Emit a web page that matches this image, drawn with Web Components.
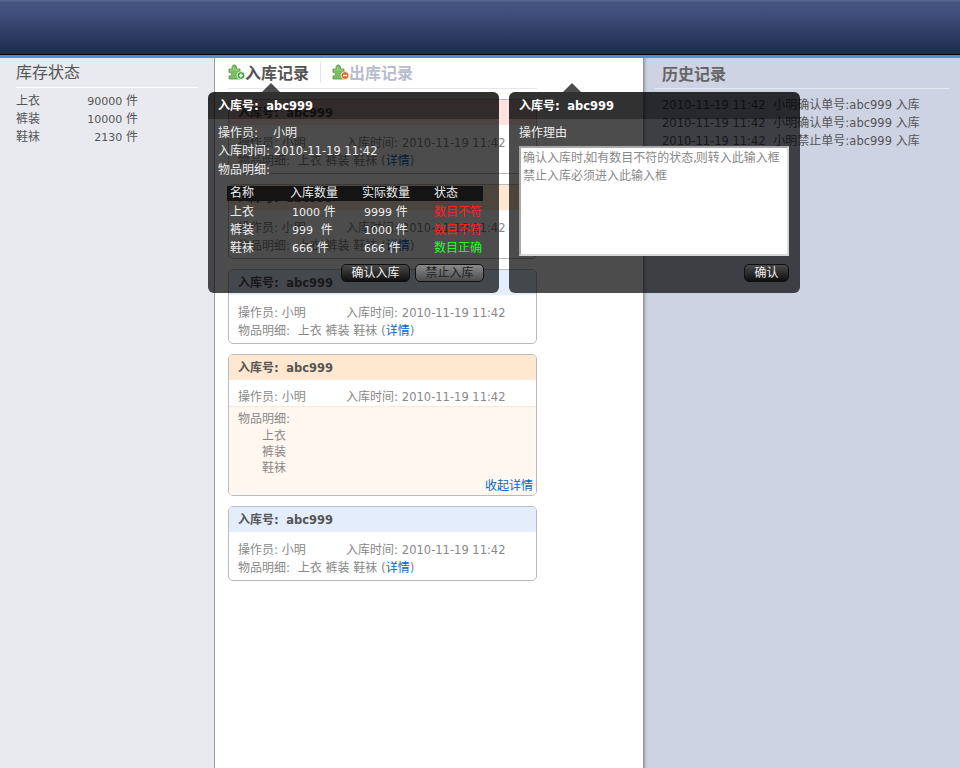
<!DOCTYPE html>
<html lang="zh">
<head>
<meta charset="utf-8">
<title>库存</title>
<style>
html,body{margin:0;height:100%;}
body{font:12px/18px "DejaVu Sans","Noto Sans CJK SC",sans-serif;color:#555;background:#fff;overflow:hidden;}
</style>
</head>
<body>
<stock-app>
  <stock-side slot="left" title="库存状态">
    <stock-row name="上衣" amount="90000"></stock-row>
    <stock-row name="裤装" amount="10000"></stock-row>
    <stock-row name="鞋袜" amount="2130"></stock-row>
  </stock-side>

  <record-tabs slot="center"></record-tabs>
  <record-card slot="center" tone="pink"></record-card>
  <record-card slot="center" tone="orange"></record-card>
  <record-card slot="center" tone="blue"></record-card>
  <record-card slot="center" tone="orange" open></record-card>
  <record-card slot="center" tone="blue"></record-card>

  <history-side slot="right" title="历史记录">
    <div><num-text>2010-11-19 11:42</num-text>&nbsp; 小明确认单号:<num-text>abc999</num-text> 入库</div>
    <div><num-text>2010-11-19 11:42</num-text>&nbsp; 小明确认单号:<num-text>abc999</num-text> 入库</div>
    <div><num-text>2010-11-19 11:42</num-text>&nbsp; 小明禁止单号:<num-text>abc999</num-text> 入库</div>
  </history-side>

  <tip-box slot="over" style="left:208px;top:92px;">
    <detail-tip></detail-tip>
  </tip-box>
  <tip-box slot="over" style="left:509px;top:92px;">
    <reason-tip></reason-tip>
  </tip-box>
</stock-app>

<script>
const puzzleIcon = (kind) => `
<svg width="18" height="16" viewBox="0 0 18 16" aria-hidden="true">
  <path d="M1 5h3.300C3.700 3.600 3.900 1 6.300 1s2.700 2.600 2 4H12v3.200c1-.5 2.600-.2 2.600 1.600S13 11.900 12 11.400V15H1v-3.200c1 .6 2.400.3 2.400-1.500S2 8 1 8.500z" fill="#7ebc62" stroke="#4c9440" stroke-width=".8"/>
  <path d="M2 6h3.500V3M7 4v2h4" fill="none" stroke="#a5d28c" stroke-width="1"/>
  <circle cx="13" cy="11.500" r="3.900" fill="${kind === "add" ? "#3f9e43" : "#e0621c"}" stroke="#fff" stroke-width=".8"/>
  ${kind === "add"
    ? `<path d="M13 9.500v4M11 11.500h4" stroke="#fff" stroke-width="1.400"/>`
    : `<path d="M11 11.500h4" stroke="#fff" stroke-width="1.600"/>`}
</svg>`

class NumText extends HTMLElement {
  connectedCallback() {
    // no whitespace here, the host is inline and it would show up as a space
    this.attachShadow({mode: "open"}).innerHTML = `<style>:host{display:inline;font-size:11.5px;}</style><slot></slot>`
  }
}

class StockApp extends HTMLElement {
  connectedCallback() {
    this.attachShadow({mode: "open"}).innerHTML = `
<style>
:host{display:block;position:relative;height:768px;overflow:hidden;}
.top{
  height:54px;
  background:linear-gradient(#5d6c9c 0,#46547f 2px,#414f7c 12px,#1e2b4f 100%);
  border-bottom:1px solid #000;
}
.line{height:3px;background:#4a8fdc;}
.cols{display:grid;grid-template-columns:215px 428px 1fr;height:710px;}
.left{background:#e8eaf0;border-right:1px solid #979db0;}
.center{background:#fff;padding:0 0 0 13px;}
.right{
  background:#cdd3e3 linear-gradient(90deg,#8a8f9d,#c2c7d6 3px,#cdd3e3 5px) no-repeat left/6px 100%;
}
</style>
<div class="top"></div>
<div class="line"></div>
<div class="cols">
  <div class="left"><slot name="left"></slot></div>
  <div class="center"><slot name="center"></slot></div>
  <div class="right"><slot name="right"></slot></div>
</div>
<slot name="over"></slot>`
  }
}

class StockSide extends HTMLElement {
  connectedCallback() {
    this.attachShadow({mode: "open"}).innerHTML = `
<style>
:host{display:block;padding:5px 16px 0;}
h2{margin:0 0 4px;height:24px;font:16px/16px "Noto Sans CJK SC",sans-serif;color:#555;border-bottom:1px solid #fff;}
</style>
<h2>${this.getAttribute("title")}</h2>
<slot></slot>`
    this.removeAttribute("title")
  }
}

class StockRow extends HTMLElement {
  connectedCallback() {
    this.attachShadow({mode: "open"}).innerHTML = `
<style>
:host{display:flex;width:122px;justify-content:space-between;height:18px;}
num-text{font-size:11px;}
</style>
<span>${this.getAttribute("name")}</span><span><num-text>${this.getAttribute("amount")}</num-text> 件</span>`
  }
}

class HistorySide extends HTMLElement {
  connectedCallback() {
    this.attachShadow({mode: "open"}).innerHTML = `
<style>
:host{display:block;padding:5px 11px 0 12px;}
h2{margin:0 0 7px;padding-left:7px;height:25px;font:bold 16px/21px "Noto Sans CJK SC",sans-serif;color:#666;border-bottom:1px solid #e6e9f1;}
.list{padding-left:7px;color:#555;}
</style>
<h2>${this.getAttribute("title")}</h2>
<div class="list"><slot></slot></div>`
    this.removeAttribute("title")
  }
}

class RecordTabs extends HTMLElement {
  connectedCallback() {
    this.attachShadow({mode: "open"}).innerHTML = `
<style>
:host{display:flex;align-items:center;box-sizing:border-box;width:309px;height:31px;padding-bottom:2px;margin-bottom:10px;border-bottom:1px solid #e3e6ee;font:bold 16px/22px "Noto Sans CJK SC",sans-serif;}
span{display:inline-flex;align-items:center;}
svg{margin-right:-1px;}
.on{color:#555;padding-right:11px;border-right:1px solid #e3e6ee;margin-right:11px;}
.off{color:#b7bccd;}
</style>
<span class="on">${puzzleIcon("add")}入库记录</span>
<span class="off">${puzzleIcon("del")}出库记录</span>`
  }
}

const TONES = {pink: "#fde2e0", orange: "#ffe8cf", blue: "#e4edfc"}

class RecordCard extends HTMLElement {
  connectedCallback() {
    const open = this.hasAttribute("open")
    const tail = open ? `
  <div class="more">
    <div>物品明细:</div>
    <div class="items"><div>上衣</div><div>裤装</div><div>鞋袜</div></div>
    <a class="fold">收起详情</a>
  </div>` : `
  <div class="row">物品明细:&nbsp; 上衣 裤装 鞋袜 (<a>详情</a>)</div>`
    this.attachShadow({mode: "open"}).innerHTML = `
<style>
:host{display:block;box-sizing:border-box;width:309px;margin-bottom:10px;border:1px solid #bbb;border-radius:5px;overflow:hidden;color:#888;}
.head{height:25px;padding-left:9px;background:${TONES[this.getAttribute("tone")]};font-weight:bold;line-height:27px;color:#555;}
.head num-text{margin-left:-1px;}
.body{padding:9px 9px 3px;}
:host([open]) .body{padding:8px 9px 0;}
.row{height:18px;}
.row.first{display:grid;grid-template-columns:108px 1fr;white-space:nowrap;}
a{color:#0066cc;}
.more{position:relative;height:85px;padding:3px 9px 0;background:#fff7f0;border-top:1px solid #ffe8cf;}
.items{padding-left:24px;line-height:16px;}
.fold{position:absolute;right:3px;bottom:0;}
</style>
<div class="head">入库号:&nbsp; <num-text>abc999</num-text></div>
<div class="body"><div class="row first"><span>操作员: 小明</span><span>入库时间: <num-text>2010-11-19 11:42</num-text></span></div>${open ? "" : tail}</div>${open ? tail : ""}`
  }
}

class TipBox extends HTMLElement {
  connectedCallback() {
    this.attachShadow({mode: "open"}).innerHTML = `
<style>
:host{display:block;position:absolute;box-sizing:border-box;width:291px;height:201px;border-radius:6px;background:rgba(0,0,0,.7);color:#eee;}
.arrow{position:absolute;left:54px;top:-9px;width:0;height:0;border:solid transparent;border-width:0 9px 9px;border-bottom-color:rgba(0,0,0,.7);}
.head{height:27px;padding-left:10px;border-radius:6px 6px 0 0;background:rgba(0,0,0,.35);font-weight:bold;line-height:29px;color:#fff;}
.head num-text{margin-left:-1px;}
.body{padding:5px 10px 0;}
</style>
<div class="arrow"></div>
<div class="head">入库号:&nbsp; <num-text>abc999</num-text></div>
<div class="body"><slot></slot></div>`
  }
}

class TipButton extends HTMLElement {
  connectedCallback() {
    this.attachShadow({mode: "open"}).innerHTML = `
<style>
:host{display:inline-block;box-sizing:border-box;height:18px;padding:0 9.5px;border:1px solid #111;border-radius:5px;background:linear-gradient(#4a4a4a,#0e0e0e);color:#eee;line-height:16px;text-align:center;}
:host([off]){background:linear-gradient(#8a8a8a,#4c4c4c);color:#222;}
</style>
<slot></slot>`
  }
}

const ROWS = [
  ["上衣", "<num-text>1000</num-text> 件", "<num-text>9999</num-text> 件", "数目不符", "#ff2020"],
  ["裤装", "<num-text>999</num-text>&nbsp; 件", "<num-text>1000</num-text> 件", "数目不符", "#ff2020"],
  ["鞋袜", "<num-text>666</num-text> 件", "<num-text>666</num-text> 件", "数目正确", "#22ff22"],
]

class DetailTip extends HTMLElement {
  connectedCallback() {
    const rows = ROWS.map((r) => `
  <div class="grid"><span>${r[0]}</span><span class="q">${r[1]}</span><span class="q">${r[2]}</span><span style="color:${r[4]}">${r[3]}</span></div>`).join("")
    this.attachShadow({mode: "open"}).innerHTML = `
<style>
:host{display:block;}
.last{margin-top:1px;}
.frame{box-sizing:border-box;width:256px;height:75px;margin:4px 0 0 9px;padding-top:3px;}
.grid{display:grid;grid-template-columns:60px 72px 72px 1fr;padding-left:3px;}
.grid.th{height:15px;line-height:15px;margin-bottom:2px;background:#141414;}
.grid:not(.th){height:18px;}
.q{padding-left:2px;}
.q num-text{font-size:11px;}
.btns{display:flex;justify-content:flex-end;gap:5px;width:266px;margin-top:6px;}
.val{margin-left:15px;}
</style>
<div>操作员:<span class="val">小明</span></div>
<div>入库时间: <num-text>2010-11-19 11:42</num-text></div>
<div class="last">物品明细:</div>
<div class="frame">
  <div class="grid th"><span>名称</span><span>入库数量</span><span>实际数量</span><span>状态</span></div>${rows}
</div>
<div class="btns"><tip-button>确认入库</tip-button><tip-button off>禁止入库</tip-button></div>`
  }
}

class ReasonTip extends HTMLElement {
  connectedCallback() {
    this.attachShadow({mode: "open"}).innerHTML = `
<style>
:host{display:block;}
.label{height:18px;}
.area{box-sizing:border-box;width:270px;height:110px;margin-top:4px;padding:1px 2px;border:2px solid #aaa;border-color:#a8a8a8 #d8d8d8 #d8d8d8 #a8a8a8;background:#fff;color:#888;}
.c{margin-right:-1.500px;}
.btns{display:flex;justify-content:flex-end;width:270px;margin-top:8px;}
</style>
<div class="label">操作理由</div>
<div class="area">确认入库时<span class="c">,</span>如有数目不符的状态<span class="c">,</span>则转入此输入框<br>禁止入库必须进入此输入框</div>
<div class="btns"><tip-button>确认</tip-button></div>`
  }
}

customElements.define("num-text", NumText)
customElements.define("stock-app", StockApp)
customElements.define("stock-side", StockSide)
customElements.define("stock-row", StockRow)
customElements.define("history-side", HistorySide)
customElements.define("record-tabs", RecordTabs)
customElements.define("record-card", RecordCard)
customElements.define("tip-box", TipBox)
customElements.define("tip-button", TipButton)
customElements.define("detail-tip", DetailTip)
customElements.define("reason-tip", ReasonTip)
</script>
</body>
</html>
